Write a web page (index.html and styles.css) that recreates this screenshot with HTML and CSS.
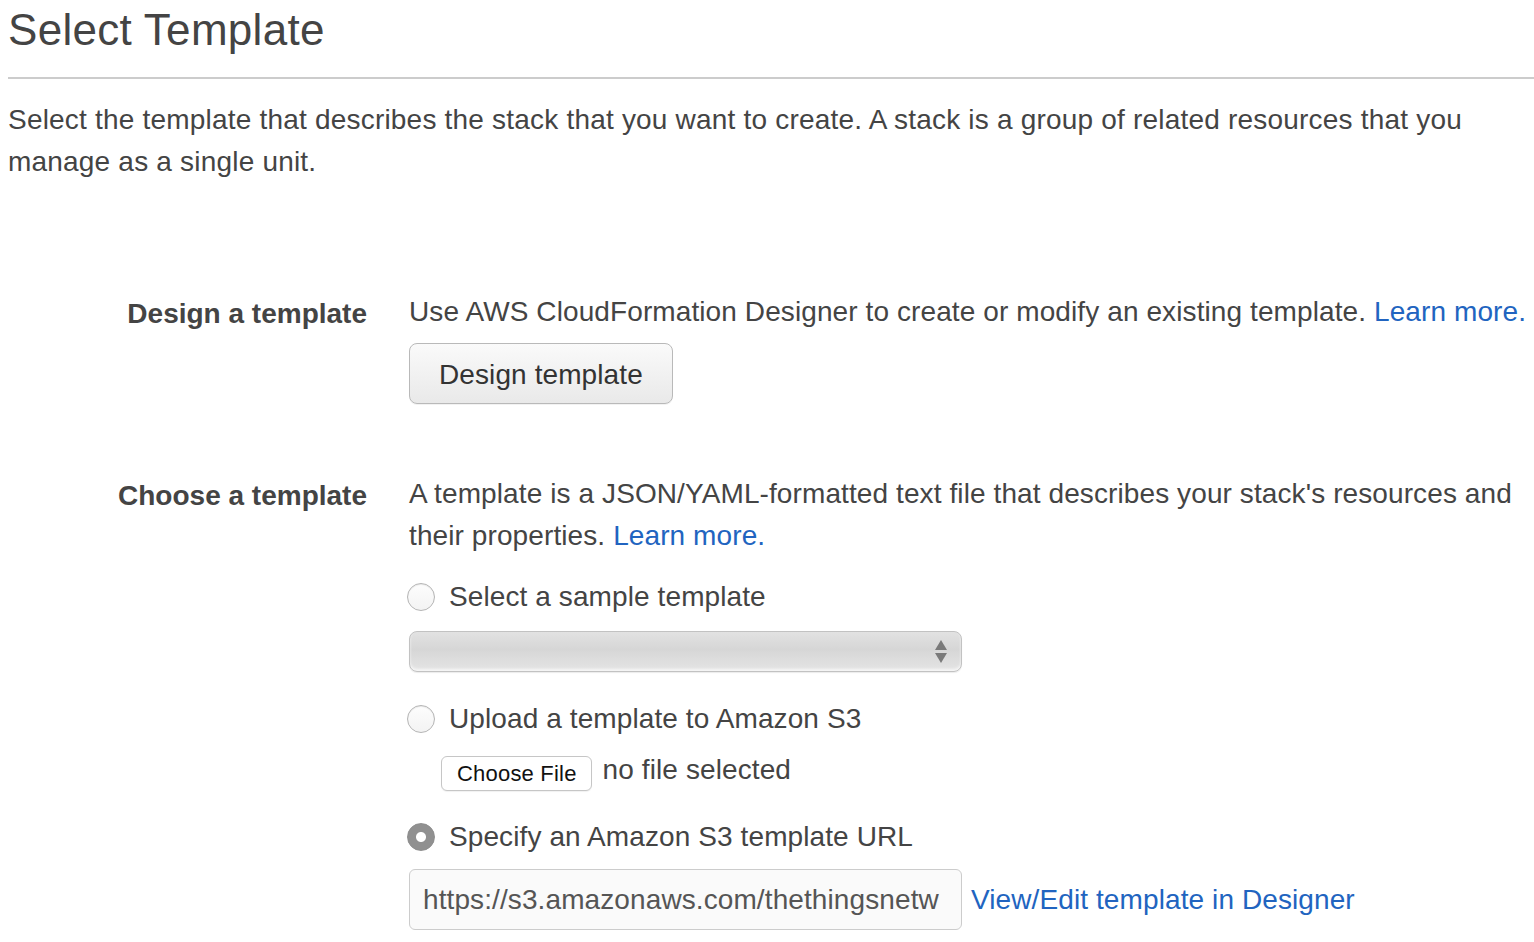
FILE: index.html
```html
<!DOCTYPE html>
<html lang="en">
<head>
<meta charset="utf-8">
<title>Select Template</title>
<link rel="stylesheet" href="styles.css">
</head>
<body>
<div class="page">
  <h1 class="title">Select Template</h1>
  <hr class="rule">
  <p class="intro">Select the template that describes the stack that you want to create. A stack is a group of related resources that you manage as a single unit.</p>

  <div class="section section-design">
    <div class="label">Design a template</div>
    <div class="content">
      <p class="desc">Use AWS CloudFormation Designer to create or modify an existing template. <a class="link" href="#">Learn more.</a></p>
      <button class="btn" type="button">Design template</button>
    </div>
  </div>

  <div class="section section-choose">
    <div class="label">Choose a template</div>
    <div class="content">
      <p class="desc">A template is a JSON/YAML-formatted text file that describes your stack's resources and their properties. <a class="link" href="#">Learn more.</a></p>

      <label class="radio-row row-sample">
        <input class="radio" type="radio" name="src">
        <span class="radio-text">Select a sample template</span>
      </label>
      <div class="select">
        <svg class="select-arrows" width="14" height="26" viewBox="0 0 14 26" aria-hidden="true">
          <polygon points="7,1 13,11 1,11" fill="#7a7a7a"/>
          <polygon points="1,14 13,14 7,24" fill="#7a7a7a"/>
        </svg>
      </div>

      <label class="radio-row row-upload">
        <input class="radio" type="radio" name="src">
        <span class="radio-text">Upload a template to Amazon S3</span>
      </label>
      <div class="file-row">
        <span class="file-btn">Choose File</span>
        <span class="file-text">no file selected</span>
      </div>

      <label class="radio-row row-url">
        <input class="radio" type="radio" name="src" checked>
        <span class="radio-text">Specify an Amazon S3 template URL</span>
      </label>
      <div class="url-row">
        <div class="url-input"><div class="url-value">https://s3.amazonaws.com/thethingsnetw</div></div>
        <a class="link" href="#">View/Edit template in Designer</a>
      </div>
    </div>
  </div>
</div>
</body>
</html>
```

FILE: styles.css
```css
html, body {
  margin: 0;
  padding: 0;
  background: #ffffff;
}

body {
  font-family: "Liberation Sans", Arial, Helvetica, sans-serif;
  color: #444444;
  font-size: 28px;
  line-height: 42px;
  letter-spacing: 0.1px;
}

.page {
  padding: 5px 0 0 8px;
}

.title {
  margin: 0;
  font-size: 44px;
  line-height: 50px;
  font-weight: normal;
  letter-spacing: 0.3px;
  color: #444444;
}

.rule {
  margin: 22px 0 0;
  height: 0;
  border: none;
  border-top: 2px solid #cccccc;
}

.intro {
  margin: 20px 0 0;
  padding-right: 30px;
  letter-spacing: 0.2px;
}

.section {
  display: grid;
  grid-template-columns: 359px 1fr;
  column-gap: 42px;
}

.section-design {
  margin-top: 108px;
}

.section-choose {
  margin-top: 69px;
}

.label {
  text-align: right;
  font-weight: bold;
  color: #444444;
  padding-top: 2px;
  letter-spacing: 0;
}

.content {
  display: flex;
  flex-direction: column;
  align-items: flex-start;
}

.desc {
  margin: 0;
}

.link {
  color: #2164c0;
  text-decoration: none;
}

.btn {
  margin-top: 10px;
  font-family: inherit;
  font-size: 28px;
  line-height: 42px;
  letter-spacing: 0.1px;
  color: #333333;
  padding: 10px 29px 7px;
  border: 1px solid #b9b9b9;
  border-radius: 8px;
  background: linear-gradient(#fafafa, #e9e9e9);
  box-shadow: 0 1px 0 rgba(0, 0, 0, 0.05);
}

.radio-row {
  display: flex;
  align-items: center;
  height: 42px;
  margin-left: -2px;
}

.row-sample {
  margin-top: 19px;
}

.row-upload {
  margin-top: 26px;
}

.row-url {
  margin-top: 22px;
}

.radio {
  appearance: none;
  -webkit-appearance: none;
  margin: 0 14px 0 0;
  width: 28px;
  height: 28px;
  border-radius: 50%;
  border: 1px solid #b5b5b5;
  background: linear-gradient(#fdfdfd, #f3f3f3);
  box-shadow: inset 0 1px 1px rgba(0, 0, 0, 0.08);
  flex: none;
}

.radio:checked {
  border-color: #8d8d8d;
  background: radial-gradient(circle, #ffffff 0 4.5px, #909090 5.5px);
  box-shadow: none;
}

.radio-text {
  color: #444444;
}

.select {
  margin-top: 13px;
  width: 553px;
  height: 41px;
  box-sizing: border-box;
  border: 1px solid #c2c2c2;
  border-radius: 8px;
  background: linear-gradient(#e2e2e2 0%, #d6d6d6 45%, #d9d9d9 55%, #e4e4e4 100%);
  box-shadow: inset 0 -2px 3px rgba(255, 255, 255, 0.7), 0 1px 1px rgba(0, 0, 0, 0.08);
  display: flex;
  align-items: center;
  justify-content: flex-end;
  padding-right: 13px;
}

.select-arrows {
  display: block;
}

.file-row {
  margin-top: 12px;
  margin-left: 32px;
  display: flex;
  align-items: center;
  height: 42px;
}

.file-btn {
  font-size: 22px;
  line-height: 24px;
  letter-spacing: 0.2px;
  color: #111111;
  padding: 5px 14px 4px 15px;
  border: 1px solid #c6c6c6;
  border-radius: 6px;
  background: #ffffff;
  box-shadow: 0 1px 1px rgba(0, 0, 0, 0.06);
  margin-right: 11px;
}

.file-text {
  color: #444444;
  position: relative;
  top: -3px;
}

.url-row {
  margin-top: 11px;
  display: flex;
  align-items: center;
}

.url-input {
  width: 553px;
  height: 61px;
  box-sizing: border-box;
  border: 1px solid #cccccc;
  border-radius: 6px;
  background: #fafafa;
  color: #555555;
  padding: 9px 13px;
  margin-right: 9px;
}

.url-value {
  white-space: nowrap;
  overflow: hidden;
}
```
